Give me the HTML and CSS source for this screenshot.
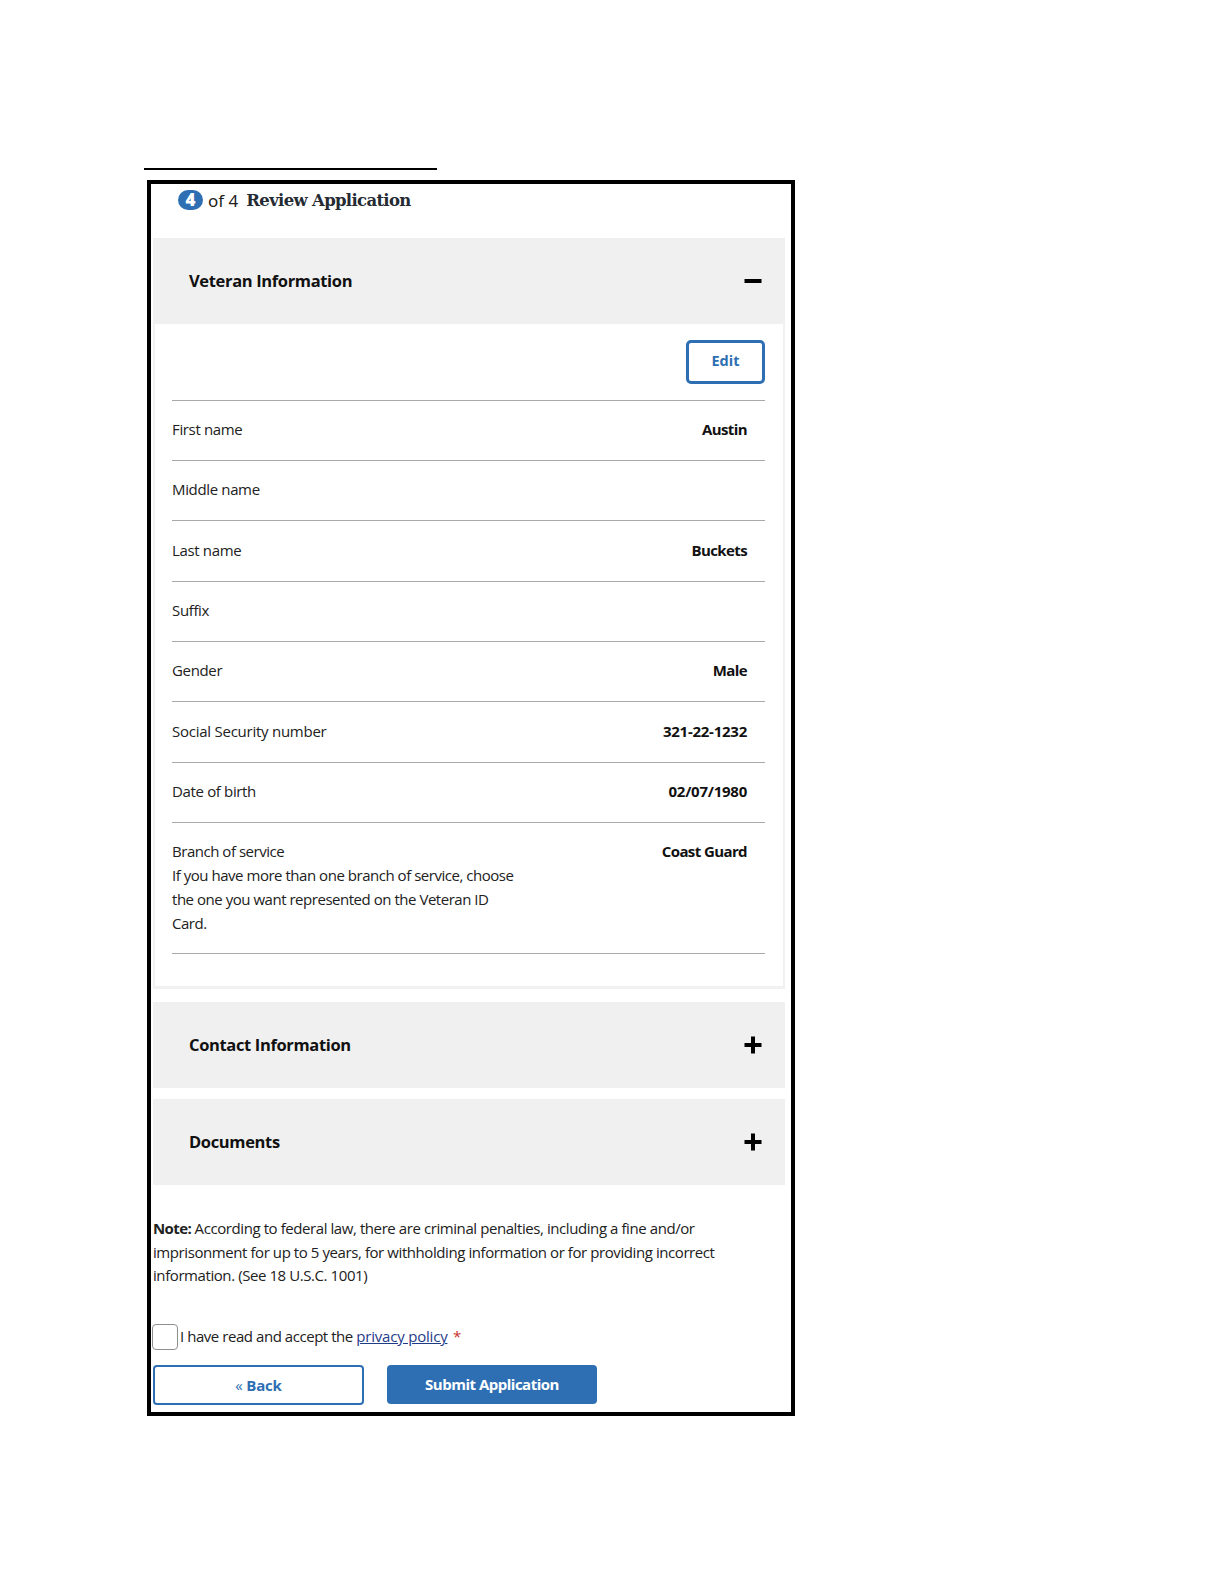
FILE: index.html
```html
<!DOCTYPE html>
<html lang="en">
<head>
<meta charset="utf-8">
<title>Review Application</title>
<link rel="stylesheet" href="styles.css">
</head>
<body>
<div class="rule"></div>
<main class="frame">
  <div class="step">
    <span class="badge">4</span>
    <span class="of">of 4</span>
    <strong class="step-title">Review Application</strong>
  </div>
  <section class="accordion-head">
    <h2>Veteran Information</h2>
    <svg class="toggle" viewBox="0 0 18 18"><rect x="0.5" y="7" width="17" height="4"/></svg>
  </section>
  <section class="panel">
    <div class="edit-row"><button class="btn-edit">Edit</button></div>
    <div class="row"><span>First name</span><b>Austin</b></div>
    <div class="row"><span>Middle name</span></div>
    <div class="row"><span>Last name</span><b>Buckets</b></div>
    <div class="row"><span>Suffix</span></div>
    <div class="row"><span>Gender</span><b>Male</b></div>
    <div class="row"><span class="wide">Social Security number</span><b class="num">321-22-1232</b></div>
    <div class="row"><span>Date of birth</span><b class="num">02/07/1980</b></div>
    <div class="row row-tall"><span class="long">Branch of service<br>If you have more than one branch of service, choose the one you want represented on the Veteran ID Card.</span><b>Coast Guard</b></div>
  </section>
  <section class="accordion-head contact">
    <h2>Contact Information</h2>
    <svg class="toggle" viewBox="0 0 18 18"><path d="M7 0.5h4V7h6.500v4H11v6.500H7V11H0.500V7H7z"/></svg>
  </section>
  <section class="accordion-head documents">
    <h2>Documents</h2>
    <svg class="toggle" viewBox="0 0 18 18"><path d="M7 0.5h4V7h6.500v4H11v6.500H7V11H0.500V7H7z"/></svg>
  </section>
  <p class="note"><b>Note:</b> According to federal law, there are criminal penalties, including a fine and/or imprisonment for up to 5 years, for withholding information or for providing incorrect information. (See 18 U.S.C. 1001)</p>
  <label class="accept"><span class="check"></span><span class="accept-text">I have read and accept the <a href="#">privacy policy</a> <em>*</em></span></label>
  <div class="actions">
    <button class="btn btn-back"><span class="arrows">«</span> Back</button>
    <button class="btn btn-submit">Submit Application</button>
  </div>
</main>
</body>
</html>
```
FILE: styles.css
```css
* { box-sizing: border-box; }
html, body { margin: 0; padding: 0; background: #fff; }
body {
  font-family: "Open Sans", "Noto Sans", sans-serif;
  color: #212121;
  height: 1584px;
  padding-top: 168px;
}
.rule { width: 293px; height: 2px; background: #000; margin-left: 144px; }
.frame {
  width: 648px;
  height: 1236px;
  margin: 10px 0 0 147px;
  border: 4px solid #000;
  padding-left: 2px;
  padding-right: 6px;
  display: flex;
  flex-direction: column;
}
.step {
  height: 54px;
  padding: 4px 0 0 25px;
  display: flex;
  align-items: flex-start;
  font-size: 18px;
  line-height: 25px;
}
.badge {
  width: 25px;
  height: 20px;
  margin-top: 2px;
  border-radius: 10px;
  background: #2e6fb4;
  color: #fff;
  font-weight: 800;
  font-size: 17px;
  line-height: 20px;
  text-align: center;
}
.of { margin-left: 5px; font-family: "Noto Sans", sans-serif; font-size: 17px; }
.step-title {
  margin-left: 8px;
  font-family: "DejaVu Serif", serif;
  font-size: 16.500px;
  letter-spacing: -0.68px;
  color: #252b33;
}
.accordion-head {
  height: 86px;
  background: #f0f0f0;
  padding: 0 23px 0 36px;
  display: flex;
  align-items: center;
  justify-content: space-between;
  flex: none;
}
.accordion-head h2 {
  margin: 0 0 2px;
  font-size: 16.500px;
  font-weight: 700;
  color: #111;
  letter-spacing: -0.35px;
}
.toggle { width: 18px; height: 18px; fill: #000; }
.contact { margin-top: 13px; }
.documents { margin-top: 11px; }
.panel {
  height: 665px;
  flex: none;
  border: solid #f1f1f1;
  border-width: 0 2px 3px;
  padding: 0 18px 0 17px;
}
.edit-row {
  height: 76.700px;
  padding-top: 16px;
  display: flex;
  justify-content: flex-end;
  border-bottom: 1px solid #a9a9a9;
}
.btn-edit {
  width: 79px;
  height: 44px;
  padding-bottom: 4px;
  background: #fff;
  border: 3px solid #2e6fb4;
  border-radius: 5px;
  color: #2e6fb4;
  font: 700 14.500px "Open Sans", sans-serif;
}
.row {
  display: flex;
  justify-content: space-between;
  align-items: flex-start;
  padding: 16.400px 18px 18.950px 0;
  border-bottom: 1px solid #a9a9a9;
  font-size: 15px;
  line-height: 24px;
  letter-spacing: -0.35px;
}
.row b { font-weight: 700; color: #111; letter-spacing: -0.6px; }
.row b.num { letter-spacing: -0.25px; }
.wide { letter-spacing: -0.25px; }
.row-tall { padding-top: 16px; padding-bottom: 18px; }
.long { width: 350px; letter-spacing: -0.47px; }
.note {
  margin: 32px 0 0;
  width: 570px;
  font-size: 15px;
  line-height: 23.700px;
  letter-spacing: -0.42px;
}
.note b { letter-spacing: -0.6px; }
.accept {
  display: flex;
  align-items: center;
  margin: 35px 0 0 -1px;
  font-size: 15px;
  line-height: 26px;
  letter-spacing: -0.45px;
}
.accept-text { margin-bottom: 2px; }
.check {
  width: 26px;
  height: 26px;
  margin-right: 2px;
  border: 1px solid #8f8f8f;
  border-radius: 4px;
  background: #fff;
}
.accept a { color: #1f3c88; letter-spacing: -0.2px; }
.accept em { color: #c9302c; font-style: normal; margin-left: 2px; }
.actions { display: flex; gap: 23px; margin-top: 14px; }
.btn {
  width: 211px;
  height: 40px;
  border-radius: 4px;
  font: 700 15px "Open Sans", sans-serif;
  letter-spacing: -0.2px;
}
.btn-back { background: #fff; border: 2px solid #2e6fb4; color: #2e6fb4; }
.arrows { font-weight: 400; }
.btn-submit { background: #2e6fb4; border: 0; color: #fff; height: 39px; width: 210px; padding-bottom: 2px; letter-spacing: -0.5px; }
```
